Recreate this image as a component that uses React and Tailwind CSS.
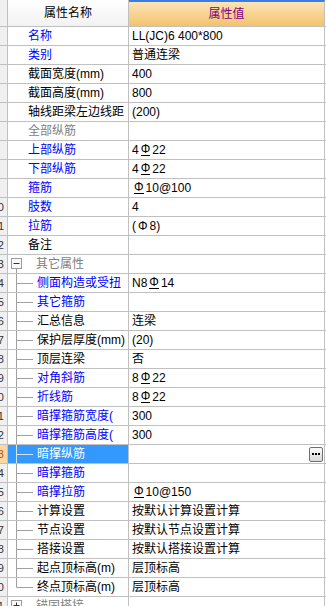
import React from 'react';

const FONT = { fontFamily: '"Liberation Sans", "Noto Sans CJK SC", sans-serif' };

// '#' = HRB400 bar symbol, '$' = plain bar symbol
const rows = [
  { n: '名称', v: 'LL(JC)6 400*800', c: 'blue' },
  { n: '类别', v: '普通连梁', c: 'blue' },
  { n: '截面宽度(mm)', v: '400' },
  { n: '截面高度(mm)', v: '800' },
  { n: '轴线距梁左边线距', v: '(200)' },
  { n: '全部纵筋', v: '', c: 'gray' },
  { n: '上部纵筋', v: '4#22', c: 'blue' },
  { n: '下部纵筋', v: '4#22', c: 'blue' },
  { n: '箍筋', v: '#10@100', c: 'blue' },
  { n: '肢数', v: '4', c: 'blue' },
  { n: '拉筋', v: '($8)', c: 'blue' },
  { n: '备注', v: '' },
  { n: '其它属性', v: '', c: 'gray', group: 'open' },
  { n: '侧面构造或受扭', v: 'N8#14', c: 'blue', child: true },
  { n: '其它箍筋', v: '', c: 'blue', child: true },
  { n: '汇总信息', v: '连梁', child: true },
  { n: '保护层厚度(mm)', v: '(20)', child: true },
  { n: '顶层连梁', v: '否', child: true },
  { n: '对角斜筋', v: '8#22', c: 'blue', child: true },
  { n: '折线筋', v: '8#22', c: 'blue', child: true },
  { n: '暗撑箍筋宽度(', v: '300', c: 'blue', child: true },
  { n: '暗撑箍筋高度(', v: '300', c: 'blue', child: true },
  { n: '暗撑纵筋', v: '', c: 'blue', child: true, selected: true },
  { n: '暗撑箍筋', v: '', c: 'blue', child: true },
  { n: '暗撑拉筋', v: '#10@150', c: 'blue', child: true },
  { n: '计算设置', v: '按默认计算设置计算', child: true },
  { n: '节点设置', v: '按默认节点设置计算', child: true },
  { n: '搭接设置', v: '按默认搭接设置计算', child: true },
  { n: '起点顶标高(m)', v: '层顶标高', child: true },
  { n: '终点顶标高(m)', v: '层顶标高', child: true, last: true },
  { n: '锚固搭接', v: '', c: 'gray', group: 'closed' },
];

const colors = {
  blue: 'text-[#0000ff]',
  gray: 'text-[#808080]',
};

const Bar = ({ hrb }) => (
  <span className={`inline-block leading-[11px] mx-[2px] ${hrb ? 'border-b border-black' : ''}`}>Φ</span>
);

const Value = ({ text }) => {
  const parts = [];
  let buf = '';
  [...text].forEach((ch, i) => {
    if (ch === '#' || ch === '$') {
      if (buf) parts.push(<span key={'t' + i}>{buf}</span>);
      buf = '';
      parts.push(<Bar key={'b' + i} hrb={ch === '#'} />);
    } else buf += ch;
  });
  if (buf) parts.push(<span key="end">{buf}</span>);
  return <span className="flex items-center whitespace-nowrap">{parts}</span>;
};

const TreeBox = ({ open }) => (
  <svg width="20" height="18" className="shrink-0">
    <rect x="3.5" y="3.5" width="10" height="10" fill="#fafafa" stroke="#9a9a9a" />
    <line x1="5.5" y1="8.5" x2="11.5" y2="8.5" stroke="#333" />
    {!open && <line x1="8.5" y1="5.5" x2="8.5" y2="11.5" stroke="#333" />}
    {open && <line x1="8.5" y1="14" x2="8.5" y2="18" stroke="#a0a0a0" />}
  </svg>
);

const TreeLine = ({ last, selected }) => {
  const s = selected ? '#cfe4ff' : '#a0a0a0';
  return (
    <svg width="29" height="18" className="shrink-0">
      <line x1="8.5" y1="0" x2="8.5" y2={last ? 9.5 : 18} stroke={s} />
      <line x1="8.5" y1="9.5" x2="25" y2="9.5" stroke={s} />
    </svg>
  );
};

const EllipsisButton = () => (
  <div className="w-[14px] h-[15px] rounded-[2px] border border-[#6f6f6f] bg-linear-to-b from-[#fafafa] to-[#d9d9d9] flex items-center justify-center gap-[1px] mr-[1px]">
    <span className="w-[2px] h-[2px] bg-black" />
    <span className="w-[2px] h-[2px] bg-black" />
    <span className="w-[2px] h-[2px] bg-black" />
  </div>
);

const Row = ({ row, idx }) => {
  const num = idx + 1;
  const sel = row.selected;
  return (
    <div className="flex h-[19px] border-b border-[#c0c0c0] text-[12px] leading-none">
      {/* row number gutter: only the tail of the number peeks out */}
      <div className={`w-[8px] shrink-0 border-r border-[#c0c0c0] overflow-hidden flex items-center justify-end ${sel ? 'bg-[#fcd7a0] text-[#c0501a]' : 'bg-[#f0f0f0] text-[#333]'}`}>
        {num >= 10 && <span className="shrink-0 mr-[3px] text-[11px]">{num}</span>}
      </div>
      <div className={`w-[121px] shrink-0 border-r border-[#c0c0c0] flex items-center overflow-hidden whitespace-nowrap ${sel ? 'bg-[#3399ff] text-white' : colors[row.c] || 'text-black'} ${row.child || row.group ? '' : 'pl-[20px]'}`}>
        {row.group && <TreeBox open={row.group === 'open'} />}
        {row.group && <span className="pl-[8px]">{row.n}</span>}
        {row.child && <TreeLine last={row.last} selected={sel} />}
        {!row.group && <span>{row.n}</span>}
      </div>
      <div className="w-[196px] shrink-0 border-r border-[#c0c0c0] flex items-center justify-between pl-[3px] text-black bg-white">
        <Value text={row.v} />
        {sel && <EllipsisButton />}
      </div>
      <div className="flex-1 bg-white" />
    </div>
  );
};

export default function App() {
  return (
    <div className="w-[326px] h-[606px] overflow-hidden bg-white select-none" style={FONT}>
      {/* header */}
      <div className="flex h-[27px] border-b border-[#c0c0c0] text-[12px]">
        <div className="w-[8px] shrink-0 border-r border-[#c0c0c0] bg-[#f0f0f0]" />
        <div className="w-[121px] shrink-0 border-r border-[#c0c0c0] bg-linear-to-b from-[#ffffff] to-[#f2f2f2] flex items-center justify-center text-black">
          属性名称
        </div>
        <div className="w-[196px] shrink-0 border-r border-[#c0c0c0] border-t-2 border-t-[#3b7de0] bg-linear-to-b from-[#fbe4b6] to-[#f3c36c] flex items-center justify-center text-[#800080]">
          属性值
        </div>
        <div className="flex-1 bg-white" />
      </div>
      {rows.map((row, i) => (
        <Row key={i} row={row} idx={i} />
      ))}
    </div>
  );
}
